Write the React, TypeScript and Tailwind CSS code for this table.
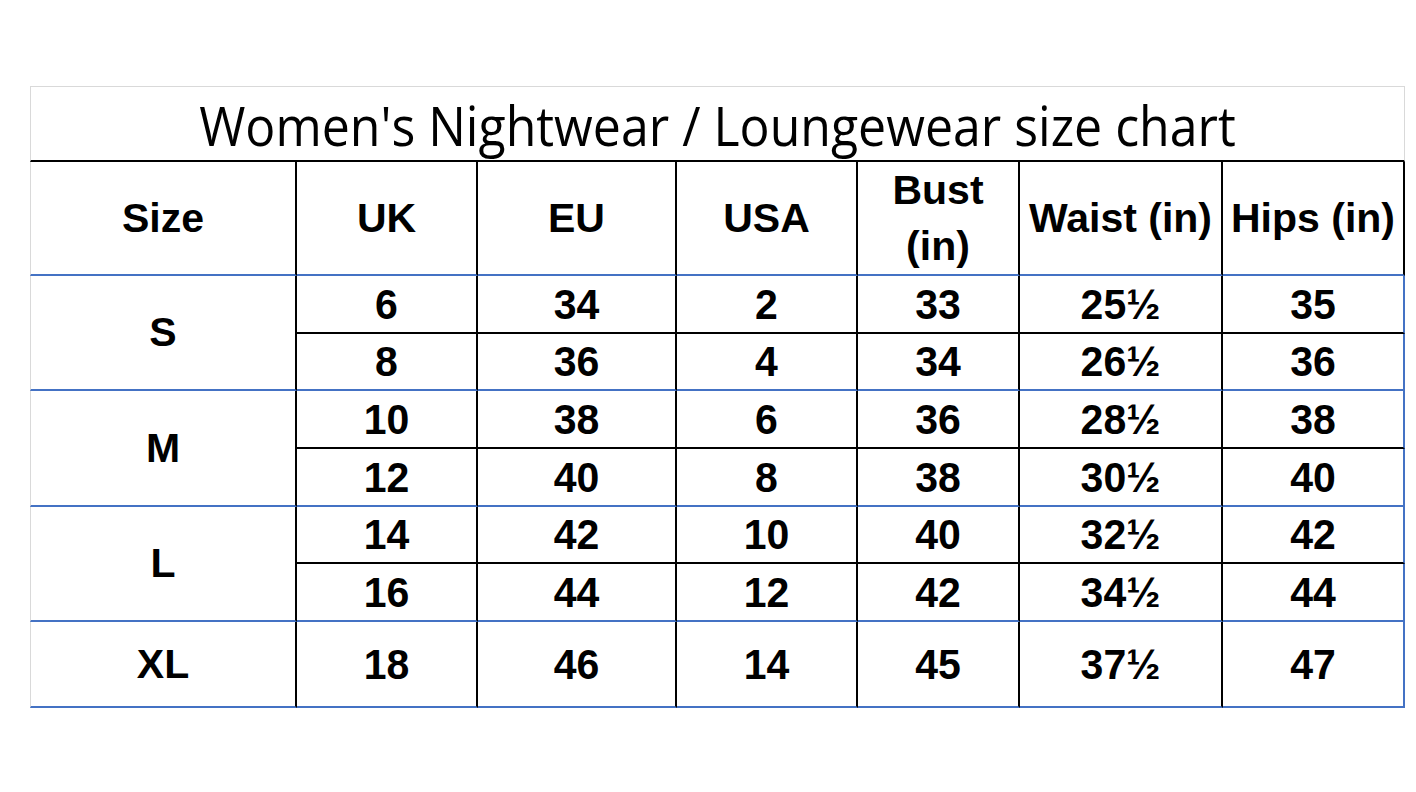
const gray = 'border-[#d9d9d9]';

type Row = { uk: string; eu: string; usa: string; bust: string; waist: string; hips: string };

const groups: { size: string; rows: Row[] }[] = [
  {
    size: 'S',
    rows: [
      { uk: '6', eu: '34', usa: '2', bust: '33', waist: '25½', hips: '35' },
      { uk: '8', eu: '36', usa: '4', bust: '34', waist: '26½', hips: '36' },
    ],
  },
  {
    size: 'M',
    rows: [
      { uk: '10', eu: '38', usa: '6', bust: '36', waist: '28½', hips: '38' },
      { uk: '12', eu: '40', usa: '8', bust: '38', waist: '30½', hips: '40' },
    ],
  },
  {
    size: 'L',
    rows: [
      { uk: '14', eu: '42', usa: '10', bust: '40', waist: '32½', hips: '42' },
      { uk: '16', eu: '44', usa: '12', bust: '42', waist: '34½', hips: '44' },
    ],
  },
  {
    size: 'XL',
    rows: [{ uk: '18', eu: '46', usa: '14', bust: '45', waist: '37½', hips: '47' }],
  },
];

function Cell({ children, className = '' }: { children: React.ReactNode; className?: string }) {
  return (
    <div className={`flex items-center justify-center text-center ${className}`}>
      {children}
    </div>
  );
}

export default function App() {
  return (
    <div className="w-[1416px] h-[792px] bg-white pt-[86px] pl-[30px]">
      <div
        className="grid grid-cols-[267px_181px_199px_181px_162px_203px_182px] grid-rows-[76px_114px_58px_57px_58px_58px_57px_58px_86px] w-[1377px] text-black font-bold text-[41px] leading-none"
        style={{ fontFamily: '"Liberation Sans", Arial, sans-serif' }}
      >
        {/* title */}
        <div
          className={`col-span-7 flex items-center justify-center border-l border-t border-r ${gray} border-b-2 border-b-black pt-[2px] font-normal text-[50px]`}
          style={{ fontFamily: '"Open Sans", sans-serif' }}
        >
          <span className="scale-y-110">Women's Nightwear / Loungewear size chart</span>
        </div>

        {/* header */}
        <Cell className={`border-l ${gray} border-r-2 border-r-black border-b-2 border-b-[#4472c4]`}>Size</Cell>
        {['UK', 'EU', 'USA'].map((h) => (
          <Cell key={h} className="border-r-2 border-black border-b-2 border-b-[#4472c4]">{h}</Cell>
        ))}
        <Cell className="border-r-2 border-black border-b-2 border-b-[#4472c4] leading-[56px]">
          <span>Bust<br />(in)</span>
        </Cell>
        <Cell className="border-r-2 border-black border-b-2 border-b-[#4472c4]">Waist (in)</Cell>
        <Cell className="border-r-2 border-black border-b-2 border-b-[#4472c4]">Hips (in)</Cell>

        {/* data */}
        {groups.map((g) => (
          <div key={g.size} className="contents">
            <Cell
              className={`${g.rows.length === 2 ? 'row-span-2' : ''} border-l ${gray} border-r-2 border-r-black border-b-2 border-b-[#4472c4]`}
            >
              {g.size}
            </Cell>
            {g.rows.map((r, i) => {
              const last = i === g.rows.length - 1;
              const bottom = last ? 'border-b-[#4472c4]' : 'border-b-black';
              const vals = [r.uk, r.eu, r.usa, r.bust, r.waist, r.hips];
              return vals.map((v, j) => (
                <Cell
                  key={`${i}-${j}`}
                  className={`border-b-2 ${bottom} border-r-2 ${j === 5 ? 'border-r-[#4472c4]' : 'border-r-black'}`}
                >
                  <span className="scale-y-105">{v}</span>
                </Cell>
              ));
            })}
          </div>
        ))}
      </div>
    </div>
  );
}
